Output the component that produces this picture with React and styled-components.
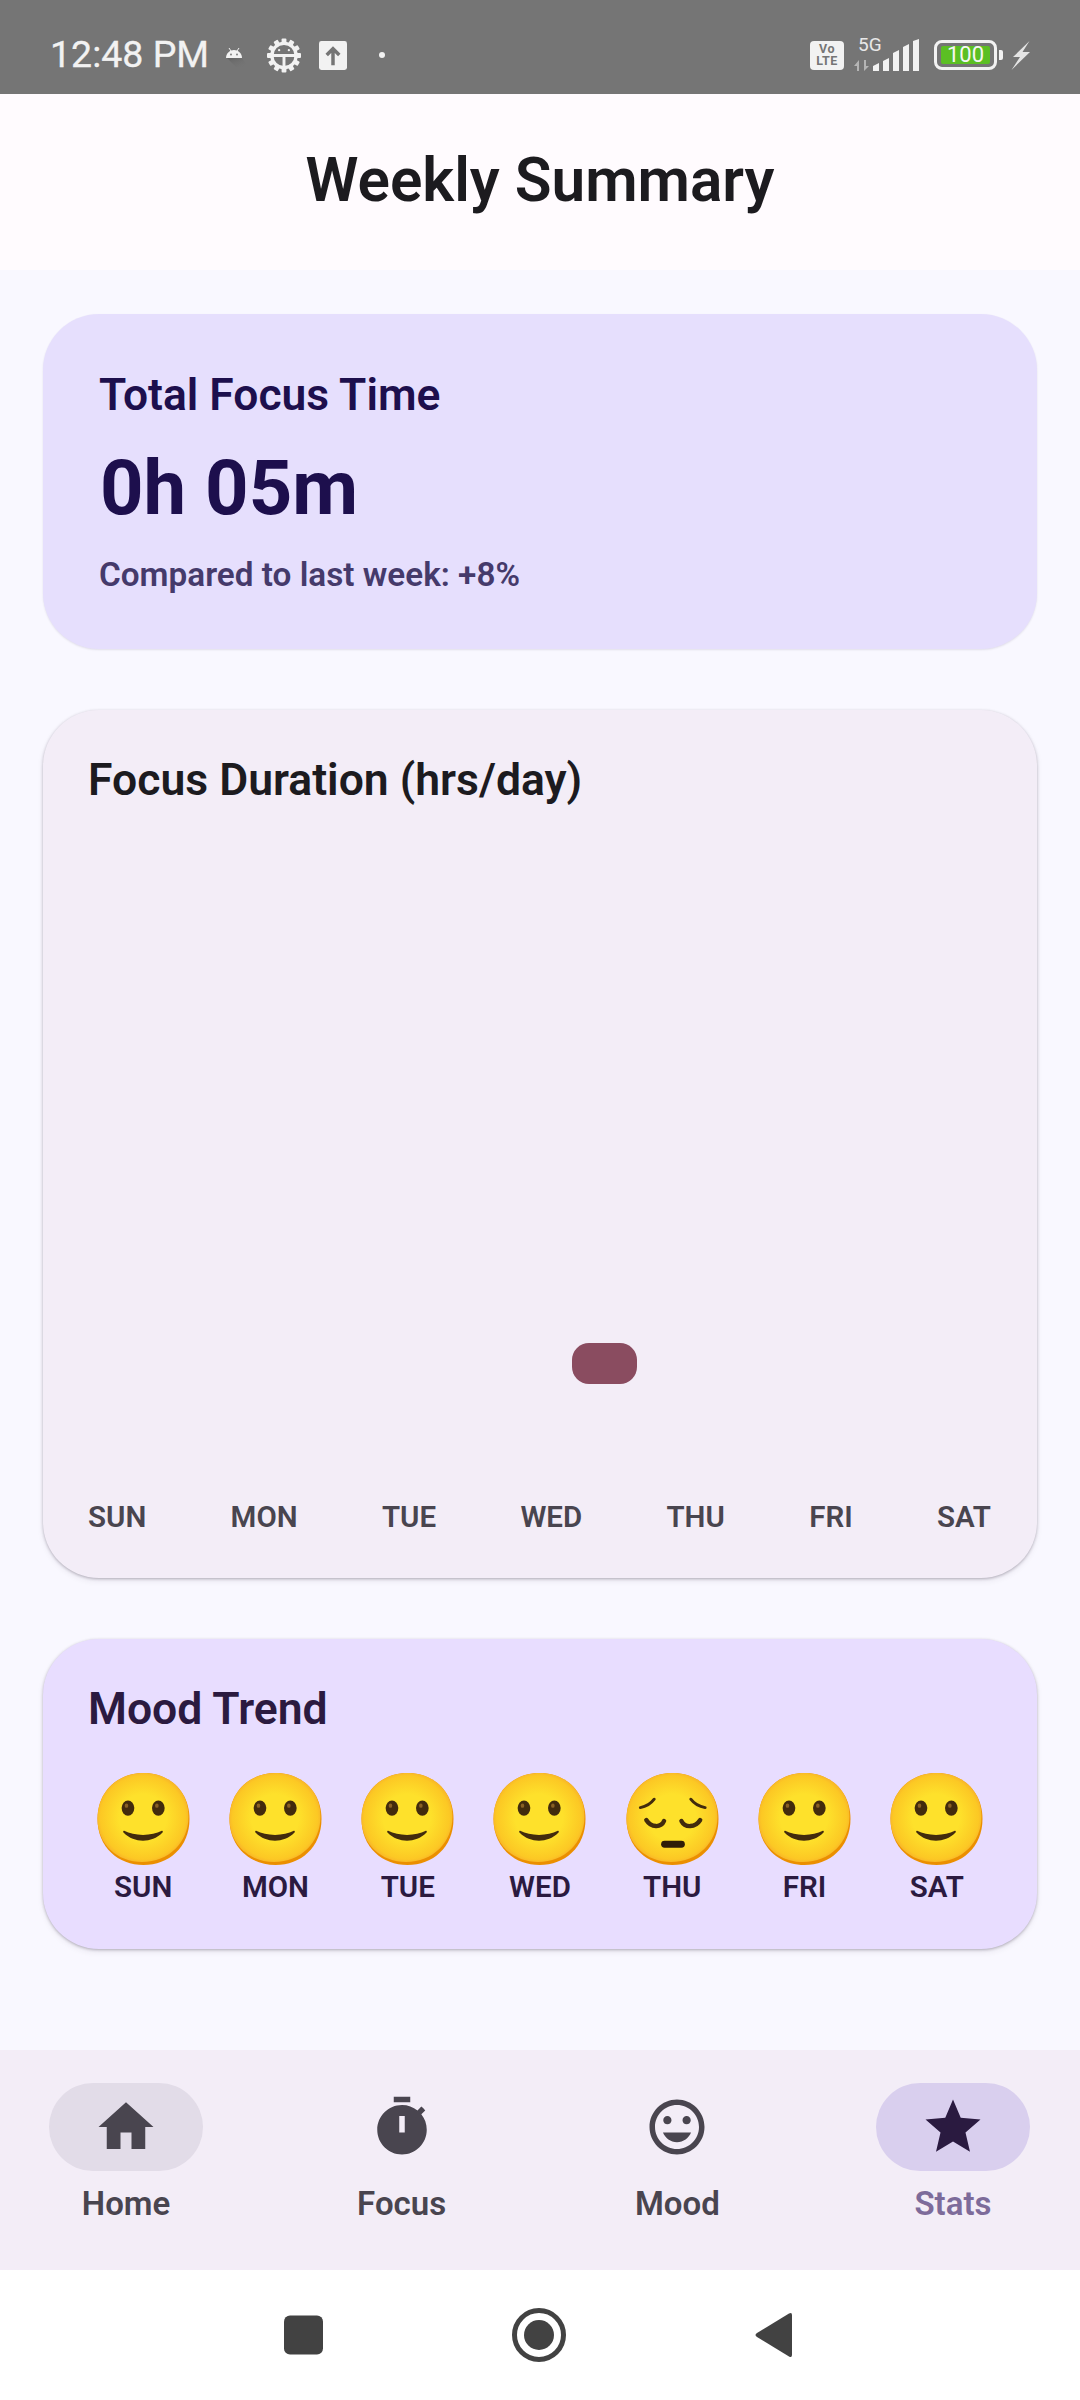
import React from "react";
import styled, { createGlobalStyle } from "styled-components";

const Global = createGlobalStyle`
  html, body { margin: 0; padding: 0; background: #f9f8ff; }
  body { font-family: Roboto, "Liberation Sans", sans-serif; }
  * { box-sizing: border-box; }
`;

const Screen = styled.div`
  width: 1080px;
  height: 2400px;
  display: flex;
  flex-direction: column;
  overflow: hidden;
  background: #f9f8ff;
`;

/* Status bar */
const StatusBar = styled.div`
  height: 94px;
  flex: none;
  background: #757575;
  display: flex;
  align-items: center;
  justify-content: space-between;
  padding: 16px 50px 0 50px;
  color: #f2f2f2;
`;
const StatusGroup = styled.div`
  display: flex;
  align-items: center;
`;
const Clock = styled.span`
  font-size: 37.5px;
  font-weight: 400;
  line-height: 1;
  margin-right: 17px;
  -webkit-text-stroke: 0.3px #f2f2f2;
`;
const IconSlot = styled.svg`
  display: block;
  flex: none;
  margin-right: ${(p) => p.$mr || 0}px;
`;
const VoLte = styled.div`
  width: 34px;
  height: 29px;
  border-radius: 4px;
  background: #f2f2f2;
  color: #757575;
  font-size: 12.5px;
  font-weight: 700;
  line-height: 12px;
  letter-spacing: 0.5px;
  text-align: center;
  padding-top: 2px;
  margin-right: 10px;
`;
const SignalBox = styled.div`
  position: relative;
  width: 66px;
  height: 32px;
  margin-right: 14px;
`;
const FiveG = styled.span`
  position: absolute;
  left: 4px;
  top: -4px;
  font-size: 19px;
  line-height: 20px;
  color: #e8e8e8;
`;
const Battery = styled.div`
  width: 63px;
  height: 30px;
  border: 3px solid #f2f2f2;
  border-radius: 8px;
  padding: 3px 4px;
  margin-right: 2px;
`;
const BatteryFill = styled.div`
  height: 18px;
  background: #5bbf23;
  border-radius: 2px;
  color: #f6f6f6;
  font-size: 22px;
  line-height: 18px;
  text-align: center;
`;
const BatteryTip = styled.div`
  width: 4px;
  height: 10px;
  background: #f2f2f2;
  border-radius: 0 2px 2px 0;
  margin-right: 8px;
`;

/* Header */
const Header = styled.header`
  height: 176px;
  flex: none;
  background: #fffbfe;
  display: flex;
  align-items: center;
  justify-content: center;
`;
const Title = styled.h1`
  margin: 0;
  font-size: 60.3px;
  font-weight: 600;
  color: #1c1b1f;
  line-height: 1;
  position: relative;
  top: -1px;
`;

/* Main */
const Main = styled.main`
  flex: 1;
  padding: 44px 43px 0;
  display: flex;
  flex-direction: column;
  gap: 61px;
`;
const Card = styled.section`
  border-radius: 56px;
  background: ${(p) => p.$bg};
  box-shadow: ${(p) =>
    p.$flat
      ? "0 1px 2px rgba(60, 50, 80, 0.12)"
      : "0 1px 3px rgba(50, 40, 60, 0.32), 0 3px 6px rgba(50, 40, 60, 0.08)"};
`;
const TotalCard = styled(Card)`
  height: 335px;
  padding: 53px 56px 0;
`;
const TotalLabel = styled.div`
  font-size: 44.4px;
  font-weight: 600;
  line-height: 56px;
  color: #1d0f4d;
`;
const TotalValue = styled.div`
  font-size: 76px;
  font-weight: 700;
  line-height: 90px;
  margin-top: 20px;
  margin-left: 1px;
  color: #1d0f4d;
`;
const TotalNote = styled.div`
  font-size: 33.3px;
  font-weight: 600;
  line-height: 40px;
  margin-top: 22px;
  color: #453a6b;
`;
const ChartCard = styled(Card)`
  height: 868px;
  padding: 44px 46px 0 45px;
  display: flex;
  flex-direction: column;
`;
const CardTitle = styled.h2`
  margin: 0;
  font-size: 44.5px;
  font-weight: 600;
  line-height: 52px;
  color: ${(p) => p.$color};
`;
const BarArea = styled.div`
  flex: none;
  height: 698px;
  padding-top: 537px;
  display: flex;
`;
const Bar = styled.div`
  width: 65px;
  height: 41px;
  border-radius: 17px;
  background: #8a4c60;
`;
const AxisRow = styled.div`
  display: flex;
  justify-content: space-between;
  margin-top: -5px;
`;
const AxisLabel = styled.span`
  font-size: 29.5px;
  font-weight: 600;
  line-height: 36px;
  color: #49454f;
`;
const MoodCard = styled(Card)`
  height: 310px;
  padding: 44px 34px 0;
`;
const MoodTitle = styled(CardTitle)`
  padding-left: 11px;
`;
const MoodRow = styled.div`
  display: grid;
  grid-template-columns: repeat(7, 1fr);
  margin-top: 38px;
`;
const MoodItem = styled.div`
  display: flex;
  flex-direction: column;
  align-items: center;
`;
const MoodDay = styled.span`
  font-size: 29.5px;
  font-weight: 600;
  line-height: 36px;
  margin-top: 4px;
  color: #2b1a40;
`;

/* Bottom nav */
const Nav = styled.nav`
  height: 220px;
  flex: none;
  background: #f3edf7;
  display: flex;
  justify-content: space-between;
  padding: 33px 50px 0 49px;
`;
const NavItem = styled.div`
  width: 154px;
  display: flex;
  flex-direction: column;
  align-items: center;
`;
const Pill = styled.div`
  width: 154px;
  height: 88px;
  border-radius: 44px;
  background: ${(p) => p.$bg || "transparent"};
  display: flex;
  align-items: center;
  justify-content: center;
`;
const NavLabel = styled.span`
  font-size: 33px;
  font-weight: 600;
  line-height: 40px;
  margin-top: 13px;
  color: ${(p) => p.$color};
`;
const SystemBar = styled.div`
  height: 130px;
  flex: none;
  background: #fff;
  display: flex;
  align-items: center;
  justify-content: center;
  padding-right: 3px;
`;

const NavIcon = ({ d, color }) => (
  <svg width="66" height="66" viewBox="0 0 24 24" fill={color} fillRule="evenodd">
    <path d={d} />
  </svg>
);

const Smile = () => (
  <>
    <ellipse cx="30.800" cy="35.500" rx="6.400" ry="7.800" fill="#422B0D" />
    <ellipse cx="61.500" cy="35.500" rx="6.400" ry="7.800" fill="#422B0D" />
    <ellipse cx="29.300" cy="33" rx="1.800" ry="2.200" fill="#896024" />
    <ellipse cx="60" cy="33" rx="1.800" ry="2.200" fill="#896024" />
    <path d="M27 58.500C37 64 55 64 65 58.500C66 58 66.500 59.500 65.500 60.500C60 66 53 68.500 46 68.500C39 68.500 32 66 26.500 60.500C25.500 59.500 26 58 27 58.500Z" fill="#422B0D" />
  </>
);
const Pensive = () => (
  <>
    <path d="M14 35C20 34 25 30.500 28 26.500" fill="none" stroke="#422B0D" strokeWidth="3" strokeLinecap="round" />
    <path d="M79.500 35C73.500 34 68 30.500 65 26.500" fill="none" stroke="#422B0D" strokeWidth="3" strokeLinecap="round" />
    <path d="M20 47.500C25 55.500 35 55.500 38 48.500" fill="none" stroke="#422B0D" strokeWidth="4.400" strokeLinecap="round" />
    <path d="M74.500 47.500C69.500 55.500 59 55.500 55.500 48.500" fill="none" stroke="#422B0D" strokeWidth="4.400" strokeLinecap="round" />
    <rect x="35" y="68.500" width="24" height="7" rx="3.500" fill="#2f1d07" />
  </>
);
const FACE = "M46.5 0C72 0 93 18 93 46.500C93 75 72 93 46.500 93C21 93 0 75 0 46.500C0 18 21 0 46.500 0Z";
const Emoji = ({ sad, id }) => (
  <svg width="93" height="92" viewBox="0 0 93 93">
    <defs>
      <radialGradient id={id} cx="50%" cy="50%" r="52%">
        <stop offset="0.5" stopColor="#FEE12B" />
        <stop offset="0.9" stopColor="#FCC824" />
        <stop offset="1" stopColor="#F7B229" />
      </radialGradient>
    </defs>
    <path d={FACE} fill="#EB8F00" />
    <path d="M46.5 0C72 0 92 17 92 44C92 70 72 90 45 90C20 90 0 72 0 46.500C0 18 21 0 46.500 0Z" fill={`url(#${id})`} />
    {sad ? <Pensive /> : <Smile />}
  </svg>
);

const days = ["SUN", "MON", "TUE", "WED", "THU", "FRI", "SAT"];

export default function App() {
  return (
    <Screen>
      <Global />
      <StatusBar>
        <StatusGroup>
          <Clock>12:48 PM</Clock>
          <IconSlot $mr={19} width="22" height="24" viewBox="0 -3 22 24">
            <defs>
              <linearGradient id="drop" x1="0" y1="0" x2="1" y2="1">
                <stop offset="0" stopColor="#555" stopOpacity=".6" />
                <stop offset="1" stopColor="#777" stopOpacity="0" />
              </linearGradient>
            </defs>
            <path d="M1 12h15l6 9H10z" fill="url(#drop)" />
            <path d="M0 12C0 7 4 4 8 4s8 3 8 8z" fill="#f2f2f2" />
            <path d="M3 2l2 3M13 2l-2 3" stroke="#f2f2f2" strokeWidth="1" />
            <circle cx="5" cy="8.500" r=".9" fill="#757575" />
            <circle cx="11" cy="8.500" r=".9" fill="#757575" />
          </IconSlot>
          <IconSlot $mr={18} width="34" height="35" viewBox="0 0 35 36">
            <g fill="#f2f2f2">
              {Array.from({ length: 12 }).map((_, i) => (
                <rect key={i} x="15" y="0.500" width="5" height="7" rx="1" transform={`rotate(${i * 30} 17.500 18)`} />
              ))}
            </g>
            <circle cx="17.500" cy="18" r="12.500" fill="#757575" stroke="#f2f2f2" strokeWidth="3.400" />
            <path d="M6 18h23M17.500 18v12" stroke="#f2f2f2" strokeWidth="3" />
            <circle cx="12.500" cy="12.500" r="1.200" fill="#f2f2f2" />
            <circle cx="22.500" cy="12.500" r="1.200" fill="#f2f2f2" />
          </IconSlot>
          <IconSlot $mr={32} width="28" height="29" viewBox="0 0 29 30">
            <rect width="29" height="30" rx="2.500" fill="#f2f2f2" />
            <path d="M14.500 25V9M8 14.500l6.500-6.500 6.500 6.500" fill="none" stroke="#757575" strokeWidth="3.600" />
          </IconSlot>
          <IconSlot width="6" height="6" viewBox="0 0 6 6">
            <circle cx="3" cy="3" r="3" fill="#f2f2f2" />
          </IconSlot>
        </StatusGroup>
        <StatusGroup>
          <VoLte>Vo<br />LTE</VoLte>
          <SignalBox>
            <FiveG>5G</FiveG>
            <svg width="66" height="32" viewBox="0 0 66 32" style={{ display: "block" }}>
              <path d="M0 27l5-6v11H3v-5zM15 27l-5 5V21h2v6z" fill="#b5b5b5" />
              <g fill="#f2f2f2">
                <path d="M19 27l6-3v8h-6z" />
                <path d="M29 22l6-3v13h-6z" />
                <path d="M39 14l6-3v21h-6z" />
                <path d="M49 8l6-3v27h-6z" />
                <path d="M59 2l6-2v32h-6z" />
              </g>
            </svg>
          </SignalBox>
          <Battery>
            <BatteryFill>100</BatteryFill>
          </Battery>
          <BatteryTip />
          <IconSlot width="19" height="29" viewBox="0 0 19 29">
            <path d="M18.500 0L2 16h7L0.500 29 19 11h-7.500z" fill="#e4e4e4" />
          </IconSlot>
        </StatusGroup>
      </StatusBar>

      <Header>
        <Title>Weekly Summary</Title>
      </Header>

      <Main>
        <TotalCard $flat $bg="#e6dffd">
          <TotalLabel>Total Focus Time</TotalLabel>
          <TotalValue>0h 05m</TotalValue>
          <TotalNote>Compared to last week: +8%</TotalNote>
        </TotalCard>

        <ChartCard $bg="#f3edf7">
          <CardTitle $color="#1c1b1f">Focus Duration (hrs/day)</CardTitle>
          <BarArea>
            <Bar style={{ marginLeft: 484 }} />
          </BarArea>
          <AxisRow>
            {days.map((d) => (
              <AxisLabel key={d}>{d}</AxisLabel>
            ))}
          </AxisRow>
        </ChartCard>

        <MoodCard $bg="#e8ddff">
          <MoodTitle $color="#2b1a40">Mood Trend</MoodTitle>
          <MoodRow>
            {days.map((d, i) => (
              <MoodItem key={d}>
                <Emoji id={`face${i}`} sad={d === "THU"} />
                <MoodDay>{d}</MoodDay>
              </MoodItem>
            ))}
          </MoodRow>
        </MoodCard>
      </Main>

      <Nav>
        <NavItem>
          <Pill $bg="#e2dce8">
            <NavIcon color="#49454f" d="M10 20v-6h4v6h5v-8h3L12 3 2 12h3v8z" />
          </Pill>
          <NavLabel $color="#49454f">Home</NavLabel>
        </NavItem>
        <NavItem>
          <Pill>
            <NavIcon color="#49454f" d="M15 1H9v2h6V1zm-4 13h2V8h-2v6zm8.030-6.610l1.420-1.420c-.43-.51-.9-.99-1.410-1.410l-1.420 1.420C16.070 4.740 14.120 4 12 4c-4.970 0-9 4.030-9 9s4.020 9 9 9 9-4.030 9-9c0-2.120-.74-4.070-1.970-5.610z" />
          </Pill>
          <NavLabel $color="#49454f">Focus</NavLabel>
        </NavItem>
        <NavItem>
          <Pill>
            <NavIcon color="#49454f" d="M11.990 2C6.470 2 2 6.480 2 12s4.470 10 9.990 10C17.520 22 22 17.520 22 12S17.520 2 11.990 2zM12 20c-4.420 0-8-3.580-8-8s3.580-8 8-8 8 3.580 8 8-3.580 8-8 8zm3.500-9c.83 0 1.500-.67 1.500-1.500S16.330 8 15.500 8 14 8.670 14 9.500s.67 1.500 1.500 1.500zm-7 0c.83 0 1.500-.67 1.500-1.500S9.330 8 8.500 8 7 8.670 7 9.500 7.670 11 8.500 11zm3.500 6.500c2.330 0 4.310-1.460 5.110-3.500H6.890c.8 2.040 2.780 3.500 5.110 3.500z" />
          </Pill>
          <NavLabel $color="#49454f">Mood</NavLabel>
        </NavItem>
        <NavItem>
          <Pill $bg="#d9cfee">
            <NavIcon color="#2a1a40" d="M12 17.270L18.180 21l-1.640-7.030L22 9.240l-7.190-.61L12 2 9.190 8.630 2 9.240l5.460 4.730L5.820 21z" />
          </Pill>
          <NavLabel $color="#7d6b9a">Stats</NavLabel>
        </NavItem>
      </Nav>

      <SystemBar>
        <svg width="510" height="56" viewBox="0 0 510 56" fill="#424242">
          <rect x="0" y="8.500" width="39" height="39" rx="6" />
          <circle cx="255" cy="28" r="24.500" fill="none" stroke="#424242" strokeWidth="5" />
          <circle cx="255" cy="28" r="15" />
          <path d="M508 8v40q0 3-3 1.500L473 30q-3-2 0-4l32-19.500q3-1.500 3 1.500z" />
        </svg>
      </SystemBar>
    </Screen>
  );
}
